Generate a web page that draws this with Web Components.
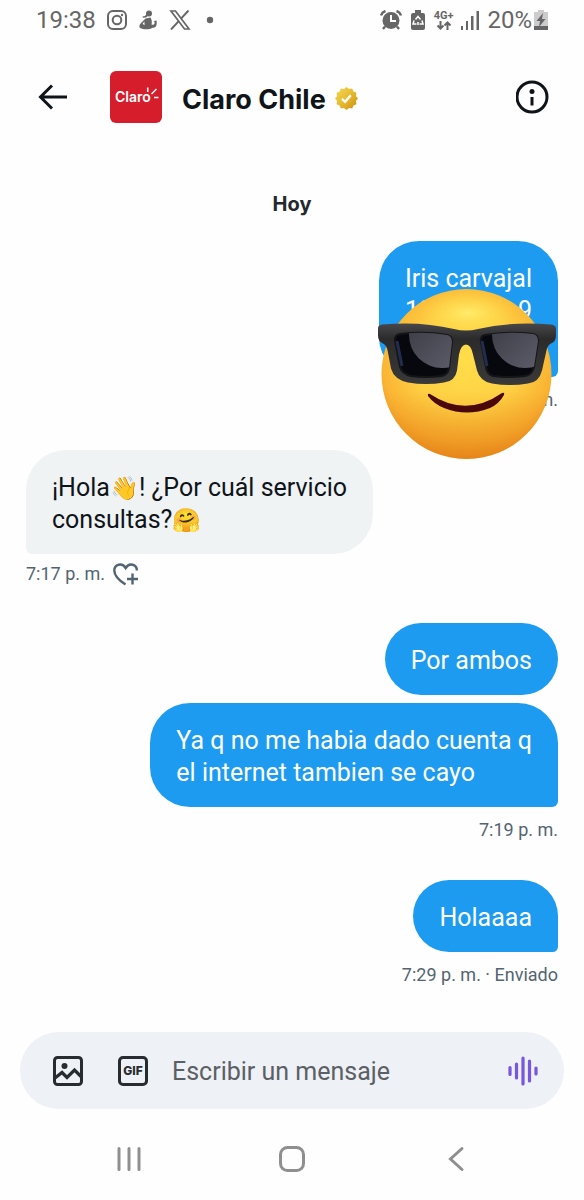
<!DOCTYPE html>
<html lang="es">
<head>
<meta charset="utf-8">
<meta name="viewport" content="width=device-width, initial-scale=1">
<title>Claro Chile</title>
<style>
  html, body { margin: 0; min-height: 100%; }
  body { background: #fefefe; color: #0f1419; font-family: Roboto, "Liberation Sans", sans-serif; }
</style>
</head>
<body>
<chat-screen></chat-screen>

<script>
const define = (name, html) => {
  const template = document.createElement('template');
  template.innerHTML = html;
  customElements.define(name, class extends HTMLElement {
    constructor() {
      super();
      this.attachShadow({ mode: 'open' }).append(template.content.cloneNode(true));
    }
  });
};

define('status-bar', `
<style>
  :host { display: flex; justify-content: space-between; align-items: center; height: 40px; padding: 0 36px; color: #666; font-size: 24px; line-height: 40px; }
  div { display: flex; align-items: center; }
  .left { gap: 11px; }
  .right { gap: 8px; }
  svg { display: block; }
  .level { gap: 2px; }
  .net { display: flex; flex-direction: column; align-items: center; font-size: 11px; font-weight: 700; line-height: 11px; }
</style>
<div class="left">
  <span>19:38</span>
  <svg width="20" height="20" viewBox="0 0 20 20" fill="none" stroke="#666" stroke-width="2"><rect x="1" y="1" width="18" height="18" rx="5"/><circle cx="10" cy="10" r="4.3"/><circle cx="15" cy="5" r="1.2" fill="#666" stroke="none"/></svg>
  <svg width="20" height="20" viewBox="0 0 20 20" fill="#666"><circle cx="11" cy="3.500" r="3"/><path d="M9.500 3 7 6 4.500 6.500l.3 1.300 3.200-.3L11 5zM7.500 8.500l5-1c1.500 2.500 1.600 4.500 1 7 2.600.8 3.500-.5 3-2.700l-.8-.9 2.800-.5c.9 4.500-.5 7.500-4 7.300-3 2-9 2-12.500.3C.8 16.800 1.500 14.500 3 13z"/><path d="m6.300 11.500.4 3.500-2.200-1z" fill="#fff"/></svg>
  <svg width="22" height="20" viewBox="0 0 22 20" fill="none" stroke="#666"><path d="M2 1h4.500L20 19h-4.500z" stroke-width="1.700"/><path d="M19.500.5 12 8.600M9.500 11.400 2 19.500" stroke-width="2"/></svg>
  <svg width="18" height="20" viewBox="0 0 18 20"><circle cx="8" cy="10" r="3.200" fill="#666"/></svg>
</div>
<div class="right">
  <svg width="22" height="20" viewBox="0 0 22 20"><g fill="none" stroke="#666" stroke-width="2.400"><path d="M1 5.500Q2 2 5.500 1M21 5.500Q20 2 16.500 1M5 16.500l-2 2.500M17 16.500l2 2.500"/></g><circle cx="11" cy="10.500" r="8.500" fill="#666"/><path d="M11 5v6h5" fill="none" stroke="#fff" stroke-width="2"/></svg>
  <svg width="16" height="20" viewBox="0 0 16 20"><path d="M5 0h6v3h2q2 0 2 2v13q0 2-2 2H3q-2 0-2-2V5q0-2 2-2h2z" fill="#666"/><path d="m5.500 9.500 2.500-3 2.500 3M12 10.500l1 3.500h-3.500M4 10.500 3 14h3.500M8 15v-3" fill="none" stroke="#fff" stroke-width="1.500"/></svg>
  <span class="net">4G+<svg width="16" height="9" viewBox="0 0 16 9" fill="none" stroke="#666" stroke-width="2"><path d="M4.500 0v7M1.500 4.500l3 3 3-3M11.500 9V2M8.500 4.500l3-3 3 3"/></svg></span>
  <svg width="18" height="20" viewBox="0 0 18 20" fill="#666"><path d="M0 16h2v4H0zM5 11h2v9H5zM10 6h2.500v14H10zM15.500 1H18v19h-2.500z"/></svg>
  <div class="level"><span>20%</span>
  <svg width="14" height="20" viewBox="0 0 14 20"><path d="M4 0h6v2h4v18H0V2h4z" fill="#ccc"/><path d="M0 16h14v4H0z" fill="#666"/><path d="M9 3 2.500 11H6L5 17l6.500-8H8z" fill="#666"/></svg></div>
</div>
`);

define('chat-header', `
<style>
  :host { display: flex; align-items: center; padding: 31px 34px 27px 38px; font: 700 27px/52px Inter, Roboto, sans-serif; }
  button { border: 0; padding: 0; background: none; display: flex; }
  .avatar { box-sizing: border-box; width: 52px; height: 52px; margin: 0 20px 0 42px; padding-left: 5px; border-radius: 6px; background: #d51d2c; color: #fff; position: relative; font: 600 14px/52px Inter, sans-serif; }
  .rays { position: absolute; left: 34px; top: 15px; }
  h1 { font: inherit; line-height: 46px; margin: 0; padding-top: 6px; }
  .badge { margin: 2px auto 0 9px; }
</style>
<button aria-label="Volver"><svg width="30" height="26" viewBox="0 0 30 26" fill="none" stroke="#0f1419" stroke-width="3"><path d="M29 13H3M14 1.500 2.500 13 14 24.500"/></svg></button>
<div class="avatar"><span>Claro</span><svg class="rays" width="15" height="14" viewBox="0 0 15 14" stroke="#fff" stroke-width="1.500"><path d="M3.700 6V1.500M7.500 8 12.500 3M10 11.500H14.500"/></svg></div>
<h1>Claro Chile</h1>
<svg class="badge" width="23" height="23" viewBox="0 0 24 24"><defs><linearGradient id="g" x1="0" y1="0" x2="1" y2="1"><stop offset="0" stop-color="#f5dc55"/><stop offset=".6" stop-color="#e2b229"/><stop offset="1" stop-color="#c98a10"/></linearGradient></defs><path fill="url(#g)" d="m12 0 2.700 2.200L18 1.600l1.200 3.200 3.200 1.200-.6 3.300L24 12l-2.200 2.700.6 3.300-3.200 1.200-1.200 3.200-3.300-.6L12 24l-2.700-2.200-3.300.6-1.200-3.200L1.600 18l.6-3.300L0 12l2.200-2.700L1.600 6l3.200-1.200L6 1.600l3.300.6z"/><path d="m7.300 12.400 3.200 3.100 6-7" fill="none" stroke="#fff" stroke-width="2.400"/></svg>
<button aria-label="Información"><svg width="34" height="34" viewBox="0 0 34 34"><circle cx="16" cy="17" r="15" fill="none" stroke="#0f1419" stroke-width="3"/><circle cx="16" cy="11.500" r="2.500" fill="#0f1419"/><path d="M14.500 17h3v8.500h-3z" fill="#0f1419"/></svg></button>
`);

define('message-bubble', `
<style>
  :host { display: block; align-self: flex-end; box-sizing: border-box; max-width: 77%; padding: 22px 26px 18px; border-radius: 40px 40px 6px 40px; background: #1d9bf0; color: #fff; font-size: 25px; line-height: 32px; }
  :host([middle]) { border-radius: 40px; margin-bottom: 8px; }
  :host([incoming]) { align-self: flex-start; background: #eff3f4; color: #0f1419; border-radius: 40px 40px 40px 6px; }
</style><slot></slot>
`);

define('message-time', `
<style>
  :host { display: flex; align-items: center; align-self: flex-end; height: 24px; padding: 11px 0 38px; color: #536471; font-size: 18px; line-height: 24px; }
  :host([incoming]) { align-self: flex-start; height: 22px; gap: 8px; padding-top: 9px; }
</style><slot></slot>
`);

define('covered-contact', `
<style>
  :host { display: block; position: relative; }
  .number { display: flex; justify-content: space-between; }
  .rest { height: 32px; }
  svg { position: absolute; right: -26px; top: 23px; z-index: 1; }
</style>
<slot></slot><div class="number"><span>12</span><span>9</span></div><div class="rest"></div>
<svg width="182" height="174" viewBox="0 0 182 174" role="img" aria-label="Cara sonriente con gafas de sol">
  <defs>
    <radialGradient id="face" cx=".5" cy=".42" r=".6"><stop offset="0" stop-color="#ffdd49"/><stop offset=".5" stop-color="#fed044"/><stop offset=".82" stop-color="#fab534"/><stop offset="1" stop-color="#ee9a25"/></radialGradient>
    <linearGradient id="low" x1="0" y1="0" x2="0" y2="1"><stop offset=".6" stop-color="#e88716" stop-opacity="0"/><stop offset="1" stop-color="#df7410" stop-opacity=".6"/></linearGradient>
    <radialGradient id="glow"><stop offset="0" stop-color="#ffee70" stop-opacity=".9"/><stop offset="1" stop-color="#ffdd49" stop-opacity="0"/></radialGradient>
    <linearGradient id="frame" x1="0" y1="0" x2="0" y2="1"><stop offset="0" stop-color="#48484a"/><stop offset=".25" stop-color="#2b2b2c"/><stop offset="1" stop-color="#39393a"/></linearGradient>
    <linearGradient id="shine" x1="0" y1="0" x2="1" y2="1"><stop offset="0" stop-color="#34353e"/><stop offset="1" stop-color="#62636f"/></linearGradient>
    <clipPath id="left"><path id="lens-l" d="M24 48q24-3 47 1 5 1 5 7l-3 26q-1 7-8 8-15 2-30 0-9-2-11-9L19 55q-1-6 5-7z"/></clipPath>
    <clipPath id="right"><path id="lens-r" d="M109 49q25-4 48-1 5 1 5 7l-4 26q-2 8-9 9-16 2-32 0-6-2-7-9l-5-25q-1-6 4-7z"/></clipPath>
  </defs>
  <circle cx="90.500" cy="88" r="85" fill="url(#face)"/>
  <circle cx="90.500" cy="88" r="85" fill="url(#low)"/>
  <ellipse cx="92" cy="27" rx="48" ry="22" fill="url(#glow)"/>
  <path d="M2 42Q2 39 6 38.500 45 35 78 43q12 3 24 0 35-8 73-4.500 5 .5 5 4v7q0 6-5 8-4 2-5 9l-4 18q-3 12-14 13-18 3-36 0-12-2-15-13l-4-16q-2-10-7-10t-7 10l-2 16q-2 11-13 12-18 3-36 0-14-3-17-14l-3-16q-1-7-5-9-5-2-5-8z" fill="url(#frame)"/>
  <use href="#lens-l" fill="#06080e" stroke="#151517" stroke-width="2"/>
  <use href="#lens-r" fill="#06080e" stroke="#151517" stroke-width="2"/>
  <path d="m21 55 5 25M106 55l5 25" stroke="#222c4c" stroke-width="3" fill="none"/>
  <g clip-path="url(#left)"><circle cx="66" cy="49" r="33" fill="url(#shine)"/></g>
  <g clip-path="url(#right)"><circle cx="149" cy="49" r="33" fill="url(#shine)"/></g>
  <path d="M54 108q36 24 72-1 3-1 2 2-5 9-14 13-23 9-46 0-10-4-16-12-1-3 2-2z" fill="#4b0809"/>
</svg>
`);

define('message-list', `
<style>
  :host { display: flex; flex-direction: column; flex: 1; padding: 42px 26px 0; }
  h2 { margin: 0 0 25px; text-align: center; font: 700 20px/24px Inter, Roboto, sans-serif; color: #24292e; }
  .emoji { font-size: 23px; line-height: 1; }
  message-time button { border: 0; padding: 0; background: none; display: flex; }
</style>
<h2>Hoy</h2>
<message-bubble><covered-contact>Iris carvajal</covered-contact></message-bubble>
<message-time>m.</message-time>
<message-bubble incoming>¡Hola<span class="emoji">👋</span>! ¿Por cuál servicio<br>consultas?<span class="emoji">🤗</span></message-bubble>
<message-time incoming>7:17 p. m. <button aria-label="Reaccionar"><svg width="26" height="23" viewBox="0 0 26 23" fill="none" stroke="#536471" stroke-width="2.400"><path d="M12.500 21.500C5.500 17 1.300 12 1.300 7.500c0-6 7.700-8.500 11.400-2.500 3.700-6 11.200-3.500 11.200 2.500M19.500 10.500v11M14 16h11"/></svg></button></message-time>
<message-bubble middle>Por ambos</message-bubble>
<message-bubble>Ya q no me habia dado cuenta q<br>el internet tambien se cayo</message-bubble>
<message-time>7:19 p. m.</message-time>
<message-bubble>Holaaaa</message-bubble>
<message-time>7:29 p. m. · Enviado</message-time>
`);

define('message-composer', `
<style>
  :host { display: flex; align-items: center; margin: 0 20px; height: 77px; padding: 0 26px 0 33px; border-radius: 40px; background: #eef1f5; }
  button { border: 0; padding: 0; background: none; display: flex; }
  .gif { box-sizing: border-box; width: 30px; height: 30px; margin: 0 24px 0 35px; border: 3px solid #272c30; border-radius: 5px; justify-content: center; font: 800 12px/24px Inter, sans-serif; color: #272c30; }
  input { flex: 1; min-width: 0; border: 0; padding: 3px 0 0; outline: 0; background: none; font: 25px/32px Roboto, sans-serif; color: #0f1419; }
  input::placeholder { color: #5b6065; opacity: 1; }
</style>
<button aria-label="Imagen"><svg width="30" height="30" viewBox="0 0 30 30"><rect x="1.500" y="1.500" width="27" height="27" rx="3" fill="none" stroke="#272c30" stroke-width="3"/><circle cx="11.500" cy="10" r="3" fill="#272c30"/><path d="m2 22 7-5.500 5 5 7.500-7.500 7 7" fill="none" stroke="#272c30" stroke-width="3.200"/></svg></button>
<button class="gif">GIF</button>
<input type="text" aria-label="Escribir un mensaje" placeholder="Escribir un mensaje">
<button aria-label="Mensaje de voz"><svg width="30" height="30" viewBox="0 0 30 30" stroke="#7856e0" stroke-width="3.200" stroke-linecap="round"><path d="M2 11.500v7M8.500 8v14M15 2v26M21.500 5v20M28 12v6"/></svg></button>
`);

define('system-nav', `
<style>
  :host { display: flex; justify-content: space-between; padding: 37px 116px 28px; }
  button { border: 0; padding: 0; background: none; display: flex; }
</style>
<button aria-label="Recientes"><svg width="26" height="26" viewBox="0 0 26 26" stroke="#8f8f8f" stroke-width="3" stroke-linecap="round"><path d="M3 2.500v21M13 2.500v21M23 2.500v21"/></svg></button>
<button aria-label="Inicio"><svg width="26" height="26" viewBox="0 0 26 26" fill="none" stroke="#8f8f8f" stroke-width="3"><rect x="1.500" y="1.500" width="23" height="23" rx="7"/></svg></button>
<button aria-label="Atrás"><svg width="26" height="26" viewBox="0 0 26 26" fill="none" stroke="#8f8f8f" stroke-width="3" stroke-linecap="round"><path d="M20 2.500 8.500 13 20 23.500"/></svg></button>
`);

define('chat-screen', `
<style>
  :host { display: flex; flex-direction: column; min-height: 100vh; }
</style>
<status-bar></status-bar>
<chat-header></chat-header>
<message-list></message-list>
<message-composer></message-composer>
<system-nav></system-nav>
`);
</script>
</body>
</html>
